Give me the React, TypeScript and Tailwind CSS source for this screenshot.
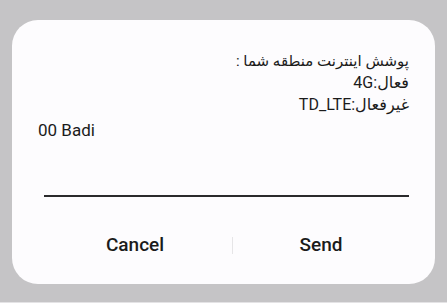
export default function App() {
  return (
    <div className="w-[447px] h-[303px] bg-[#c5c4c6] flex flex-col" style={{ fontFamily: 'Roboto, "DejaVu Sans", sans-serif' }}>
      <div className="mx-[12px] mt-[20px] h-[264px] rounded-[26px] bg-[#fdfcfe] px-[26px] pt-[30px] flex flex-col text-[#1b1b1b]">
        <div dir="rtl" className="text-[15px] leading-[22px] text-right">
          <p>پوشش اینترنت منطقه شما :</p>
          <p className="text-[16px]">فعال:4G</p>
          <p className="text-[16px]">غیرفعال:TD_LTE</p>
        </div>
        <p className="mt-[3px] text-[17px] leading-[22px]">00 Badi</p>
        <div className="mt-[54px] ml-[6px] h-[2px] bg-[#2a2a2c]" />
        <div className="mt-[36px] flex items-center">
          <button className="w-[194px] text-center text-[19px] font-medium leading-[24px]">Cancel</button>
          <div className="w-px h-[17px] bg-[#e6e5e7]" />
          <button className="flex-1 text-center text-[19px] font-medium leading-[24px]">Send</button>
        </div>
      </div>
      <div className="mt-auto h-px bg-[#e4e3e5]" />
    </div>
  )
}
